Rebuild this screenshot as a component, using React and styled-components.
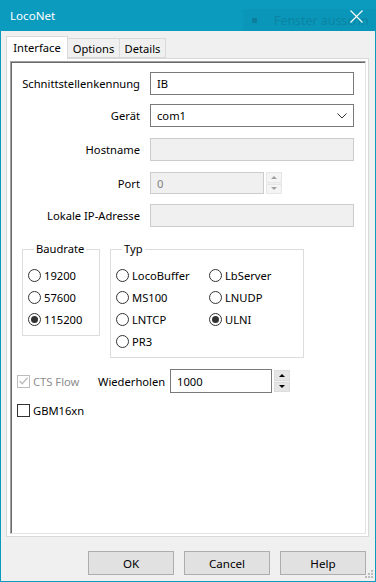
import React from "react";
import styled, { createGlobalStyle } from "styled-components";

const GlobalStyle = createGlobalStyle`
  body {
    margin: 0;
    background: #ffffff;
    font-family: "Noto Sans", "Open Sans", sans-serif;
    font-size: 11.2px;
    color: #000;
  }
`;

const Window = styled.div`
  width: 376px;
  height: 582px;
  display: flex;
  flex-direction: column;
  box-sizing: border-box;
`;

const TitleBar = styled.div`
  position: relative;
  height: 31px;
  flex: none;
  background: #0b9bbf;
  display: flex;
  align-items: center;
  padding-left: 10px;
  color: #fff;
  font-size: 11.6px;
  overflow: hidden;
`;

const GhostTip = styled.div`
  position: absolute;
  left: 243px;
  top: 9px;
  right: 0;
  bottom: 0;
  background: #0a96b8;
  display: flex;
  align-items: center;
  padding-left: 9px;
  gap: 17px;
  color: #0a84a2;
  font-size: 12.4px;
  white-space: nowrap;
`;

const GhostDot = styled.span`
  width: 5px;
  height: 5px;
  background: #0a7f9c;
`;

const CloseButton = styled.div`
  position: absolute;
  right: 13px;
  top: 10px;
  width: 13px;
  height: 13px;
`;

const Body = styled.div`
  position: relative;
  flex: 1;
  display: flex;
  flex-direction: column;
  background: #f0f0f0;
  border: 1px solid #0b9bbf;
  border-top: none;
  padding: 5px 5px 6px 5px;
`;

const TabStrip = styled.div`
  height: 22px;
  display: flex;
  align-items: flex-end;
  flex: none;
`;

const Tab = styled.div`
  position: relative;
  z-index: ${(p) => (p.$active ? 2 : 1)};
  box-sizing: border-box;
  width: ${(p) => p.$w}px;
  height: ${(p) => (p.$active ? 23 : 20)}px;
  margin-bottom: ${(p) => (p.$active ? -1 : 0)}px;
  margin-left: ${(p) => (p.$first ? 0 : -1)}px;
  background: ${(p) => (p.$active ? "#ffffff" : "#f0f0f0")};
  border: 1px solid #d9d9d9;
  border-bottom: ${(p) => (p.$active ? "none" : "1px solid #d9d9d9")};
  display: flex;
  align-items: center;
  justify-content: center;
  padding-bottom: ${(p) => (p.$active ? 1 : 0)}px;
`;

const TabPanel = styled.div`
  flex: 1;
  display: flex;
  background: #fff;
  border: 1px solid #d9d9d9;
  padding: 2px 2px 2px 3px;
  width: 363px;
  box-sizing: border-box;
`;

const Sunken = styled.div`
  flex: 1;
  border-top: 1px solid #a0a0a0;
  border-left: 1px solid #a0a0a0;
  border-right: 1px solid #e3e3e3;
  border-bottom: 1px solid #e3e3e3;
  box-shadow: inset 1px 1px 0 #696969;
  padding-top: 10px;
  display: flex;
  flex-direction: column;
`;

const FieldRow = styled.div`
  display: grid;
  grid-template-columns: 129px ${(p) => p.$w || 204}px auto;
  column-gap: 10px;
  align-items: center;
  margin-top: ${(p) => p.$mt || 0}px;
  height: ${(p) => p.$h || 23}px;
`;

const Label = styled.span`
  text-align: right;
  white-space: nowrap;
`;

const TextBox = styled.div`
  box-sizing: border-box;
  width: ${(p) => (p.$w ? `${p.$w}px` : "auto")};
  height: ${(p) => p.$h || 23}px;
  border: 1px solid ${(p) => (p.$disabled ? "#cccccc" : "#7a7a7a")};
  background: ${(p) => (p.$disabled ? "#f0f0f0" : "#ffffff")};
  color: ${(p) => (p.$disabled ? "#7f7f7f" : "#000")};
  display: flex;
  align-items: center;
  justify-content: space-between;
  padding: 0 6px;
`;

const SpinBox = styled.div`
  display: flex;
  flex-direction: column;
  width: 16px;
  height: ${(p) => p.$h || 22}px;
  margin-left: ${(p) => p.$ml}px;
  gap: 1px;
  background: #f0f0f0;
`;

const SpinHalf = styled.div`
  flex: 1;
  box-sizing: border-box;
  border: 1px solid ${(p) => (p.$disabled ? "#e6e6e6" : "#dcdcdc")};
  background: ${(p) => (p.$disabled ? "#f4f4f4" : "#e5e5e5")};
  display: flex;
  align-items: center;
  justify-content: center;
  &::after {
    content: "";
    border-left: 3px solid transparent;
    border-right: 3px solid transparent;
    ${(p) =>
      p.$up
        ? `border-bottom: 3px solid ${p.$disabled ? "#a0a0a0" : "#000"};`
        : `border-top: 3px solid ${p.$disabled ? "#a0a0a0" : "#000"};`}
  }
`;

const GroupRow = styled.div`
  display: flex;
  align-items: flex-start;
  gap: 10px;
  margin-top: 14px;
  padding-left: 11px;
`;

const Group = styled.fieldset`
  margin: 0;
  box-sizing: border-box;
  width: ${(p) => p.$w}px;
  border: 1px solid #dcdcdc;
  padding: 7px 0 5px 5px;
  min-width: 0;
`;

const Legend = styled.legend`
  padding: 0 2px;
  margin-left: 6px;
  line-height: 16px;
`;

const RadioGrid = styled.div`
  display: grid;
  grid-template-columns: ${(p) => p.$cols || "auto"};
  grid-auto-rows: 22px;
`;

const Option = styled.label`
  display: flex;
  align-items: center;
  gap: 3px;
  white-space: nowrap;
  color: ${(p) => (p.$disabled ? "#8d8d8d" : "#000")};
`;

const RadioCircle = styled.span`
  box-sizing: border-box;
  width: 13px;
  height: 13px;
  border-radius: 50%;
  border: 1px solid #333;
  background: #fff;
  display: flex;
  align-items: center;
  justify-content: center;
  &::after {
    content: "";
    width: 7px;
    height: 7px;
    border-radius: 50%;
    background: ${(p) => (p.$checked ? "#333" : "transparent")};
  }
`;

const CheckSquare = styled.span`
  box-sizing: border-box;
  width: 13px;
  height: 13px;
  border: 1px solid ${(p) => (p.$disabled ? "#bcbcbc" : "#333")};
  background: #fff;
  display: flex;
  align-items: center;
  justify-content: center;
`;

const BottomRow = styled.div`
  display: flex;
  align-items: center;
  height: 24px;
  margin-top: ${(p) => p.$mt || 0}px;
  padding-left: 6px;
`;

const CheckSlot = styled.div`
  width: ${(p) => p.$w}px;
  flex: none;
`;

const RepeatLabel = styled.span`
  width: 72px;
  flex: none;
  white-space: nowrap;
`;

const ButtonRow = styled.div`
  display: flex;
  justify-content: flex-end;
  gap: 10px;
  margin-top: 14px;
  padding-right: 4px;
`;

const Button = styled.button`
  width: 86px;
  height: 24px;
  background: #e1e1e1;
  border: 1px solid #adadad;
  font-family: inherit;
  font-size: 11.6px;
  color: #000;
  padding: 0;
`;

const Grip = styled.svg`
  position: absolute;
  right: 2px;
  bottom: 3px;
`;

const Spinner = ({ disabled, h, ml }) => (
  <SpinBox $h={h} $ml={ml}>
    <SpinHalf $up $disabled={disabled} />
    <SpinHalf $disabled={disabled} />
  </SpinBox>
);

const Radio = ({ checked, children }) => (
  <Option>
    <RadioCircle $checked={checked} />
    {children}
  </Option>
);

const Check = ({ checked, disabled, children }) => (
  <Option $disabled={disabled}>
    <CheckSquare $disabled={disabled}>
      {checked && (
        <svg width="9" height="8" viewBox="0 0 9 8">
          <polyline points="0.5,4 3.2,6.8 8.5,0.8" fill="none" stroke="#bcbcbc" strokeWidth="1.3" />
        </svg>
      )}
    </CheckSquare>
    {children}
  </Option>
);

export default function App() {
  return (
    <Window>
      <GlobalStyle />
      <TitleBar>
        LocoNet
        <GhostTip>
          <GhostDot />
          Fenster ausschn
        </GhostTip>
        <CloseButton>
          <svg width="13" height="13" viewBox="0 0 13 13">
            <path d="M0.5 0.5 L12.5 12.5 M12.5 0.5 L0.5 12.5" stroke="#fff" strokeWidth="1.1" />
          </svg>
        </CloseButton>
      </TitleBar>

      <Body>
        <TabStrip>
          <Tab $active $first $w={62}>Interface</Tab>
          <Tab $w={53}>Options</Tab>
          <Tab $w={47}>Details</Tab>
        </TabStrip>

        <TabPanel>
          <Sunken>
            <FieldRow>
              <Label>Schnittstellenkennung</Label>
              <TextBox>IB</TextBox>
            </FieldRow>
            <FieldRow $mt={9}>
              <Label>Gerät</Label>
              <TextBox>
                com1
                <svg width="10" height="6" viewBox="0 0 10 6">
                  <polyline points="0.5,0.5 5,5 9.5,0.5" fill="none" stroke="#333" strokeWidth="1" />
                </svg>
              </TextBox>
            </FieldRow>
            <FieldRow $mt={11}>
              <Label>Hostname</Label>
              <TextBox $disabled />
            </FieldRow>
            <FieldRow $mt={11} $w={114} $h={22}>
              <Label>Port</Label>
              <TextBox $disabled $h={22}>0</TextBox>
              <Spinner disabled h={22} ml={-8} />
            </FieldRow>
            <FieldRow $mt={10}>
              <Label>Lokale IP-Adresse</Label>
              <TextBox $disabled />
            </FieldRow>

            <GroupRow>
              <Group $w={78}>
                <Legend>Baudrate</Legend>
                <RadioGrid>
                  <Radio>19200</Radio>
                  <Radio>57600</Radio>
                  <Radio checked>115200</Radio>
                </RadioGrid>
              </Group>
              <Group $w={194}>
                <Legend>Typ</Legend>
                <RadioGrid $cols="93px auto">
                  <Radio>LocoBuffer</Radio>
                  <Radio>LbServer</Radio>
                  <Radio>MS100</Radio>
                  <Radio>LNUDP</Radio>
                  <Radio>LNTCP</Radio>
                  <Radio checked>ULNI</Radio>
                  <Radio>PR3</Radio>
                </RadioGrid>
              </Group>
            </GroupRow>

            <BottomRow $mt={11}>
              <CheckSlot $w={81}>
                <Check checked disabled>CTS Flow</Check>
              </CheckSlot>
              <RepeatLabel>Wiederholen</RepeatLabel>
              <TextBox $w={102} $h={24}>1000</TextBox>
              <Spinner h={22} ml={2} />
            </BottomRow>
            <BottomRow $mt={5}>
              <Check>GBM16xn</Check>
            </BottomRow>
          </Sunken>
        </TabPanel>

        <ButtonRow>
          <Button>OK</Button>
          <Button>Cancel</Button>
          <Button>Help</Button>
        </ButtonRow>

        <Grip width="8" height="8" viewBox="0 0 8 8">
          <rect x="6" y="0" width="2" height="2" fill="#bdbdbd" />
          <rect x="3" y="3" width="2" height="2" fill="#bdbdbd" />
          <rect x="6" y="3" width="2" height="2" fill="#bdbdbd" />
          <rect x="0" y="6" width="2" height="2" fill="#bdbdbd" />
          <rect x="3" y="6" width="2" height="2" fill="#bdbdbd" />
          <rect x="6" y="6" width="2" height="2" fill="#bdbdbd" />
        </Grip>
      </Body>
    </Window>
  );
}
